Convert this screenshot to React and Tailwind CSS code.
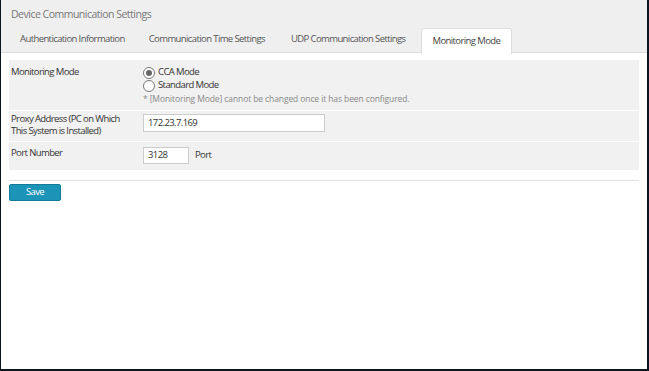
const tabs = [
  "Authentication Information",
  "Communication Time Settings",
  "UDP Communication Settings",
  "Monitoring Mode",
];

const Radio = ({ checked, label }) => (
  <label className="flex items-center gap-[3px] h-[13px]">
    <span className="w-[12px] h-[12px] rounded-full border border-[#777] bg-white flex items-center justify-center">
      {checked && <span className="w-[6px] h-[6px] rounded-full bg-[#666]" />}
    </span>
    <span>{label}</span>
  </label>
);

export default function App() {
  return (
    <div
      className="w-[649px] h-[371px] bg-white border-l border-r-2 border-b-2 border-[#0b1720] text-[9.5px] tracking-[-0.6px] text-[#333] overflow-hidden flex flex-col"
      style={{ fontFamily: '"Open Sans", "Noto Sans", sans-serif' }}
    >
      {/* header */}
      <div className="bg-[#efefef] border-b border-[#dcdcdc] h-[53px] flex flex-col">
        <div className="px-[10px] pt-[7px] h-[27px] text-[10.5px] tracking-[-0.5px] text-[#777]">Device Communication Settings</div>
        <div className="flex pl-[7px] h-[26px] items-end">
          {tabs.map((t, i) =>
            i === 3 ? (
              <div
                key={t}
                className="ml-[3px] h-[26px] px-[11px] bg-white border border-b-0 border-[#ddd] rounded-t-[3px] flex items-center text-[#444] -mb-px relative top-px"
              >
                {t}
              </div>
            ) : (
              <div key={t} className={`h-[26px] px-[12px] flex items-center text-[#555] ${i === 2 ? "ml-[2px]" : ""}`}>
                {t}
              </div>
            )
          )}
        </div>
      </div>

      {/* form */}
      <div className="px-[8px] pt-[7px]">
        <div className="flex flex-col gap-px bg-white">
          <div className="flex bg-[#f1f1f1] h-[50px]">
            <div className="w-[134px] pl-[2px] pt-[5px]">Monitoring Mode</div>
            <div className="pt-[6px] flex flex-col">
              <Radio checked label="CCA Mode" />
              <Radio label="Standard Mode" />
              <div className="text-[8.5px] tracking-[-0.1px] text-[#888] mt-[1px]">
                * [Monitoring Mode] cannot be changed once it has been configured.
              </div>
            </div>
          </div>
          <div className="flex bg-[#f1f1f1] h-[30px]">
            <div className="w-[134px] pl-[2px] pr-[12px] pt-[2px] leading-[12px]">
              Proxy Address (PC on Which This System is Installed)
            </div>
            <div className="pt-[3px]">
              <div className="w-[182px] h-[18px] bg-white border border-[#ccc] px-[4px] flex items-center">172.23.7.169</div>
            </div>
          </div>
          <div className="flex bg-[#f1f1f1] h-[28px]">
            <div className="w-[134px] pl-[2px] pt-[4px]">Port Number</div>
            <div className="pt-[5px] flex items-start gap-[6px]">
              <div className="w-[46px] h-[17px] bg-white border border-[#ccc] px-[4px] flex items-center">3128</div>
              <span className="pt-[1px]">Port</span>
            </div>
          </div>
        </div>
        <div className="mt-[10px] border-t border-[#e3e3e3]" />
        <button className="mt-[3px] w-[52px] h-[17px] bg-[#1b94b8] border border-[#157a99] rounded-[2px] text-white text-[9.5px] flex items-center justify-center">
          Save
        </button>
      </div>
    </div>
  );
}
